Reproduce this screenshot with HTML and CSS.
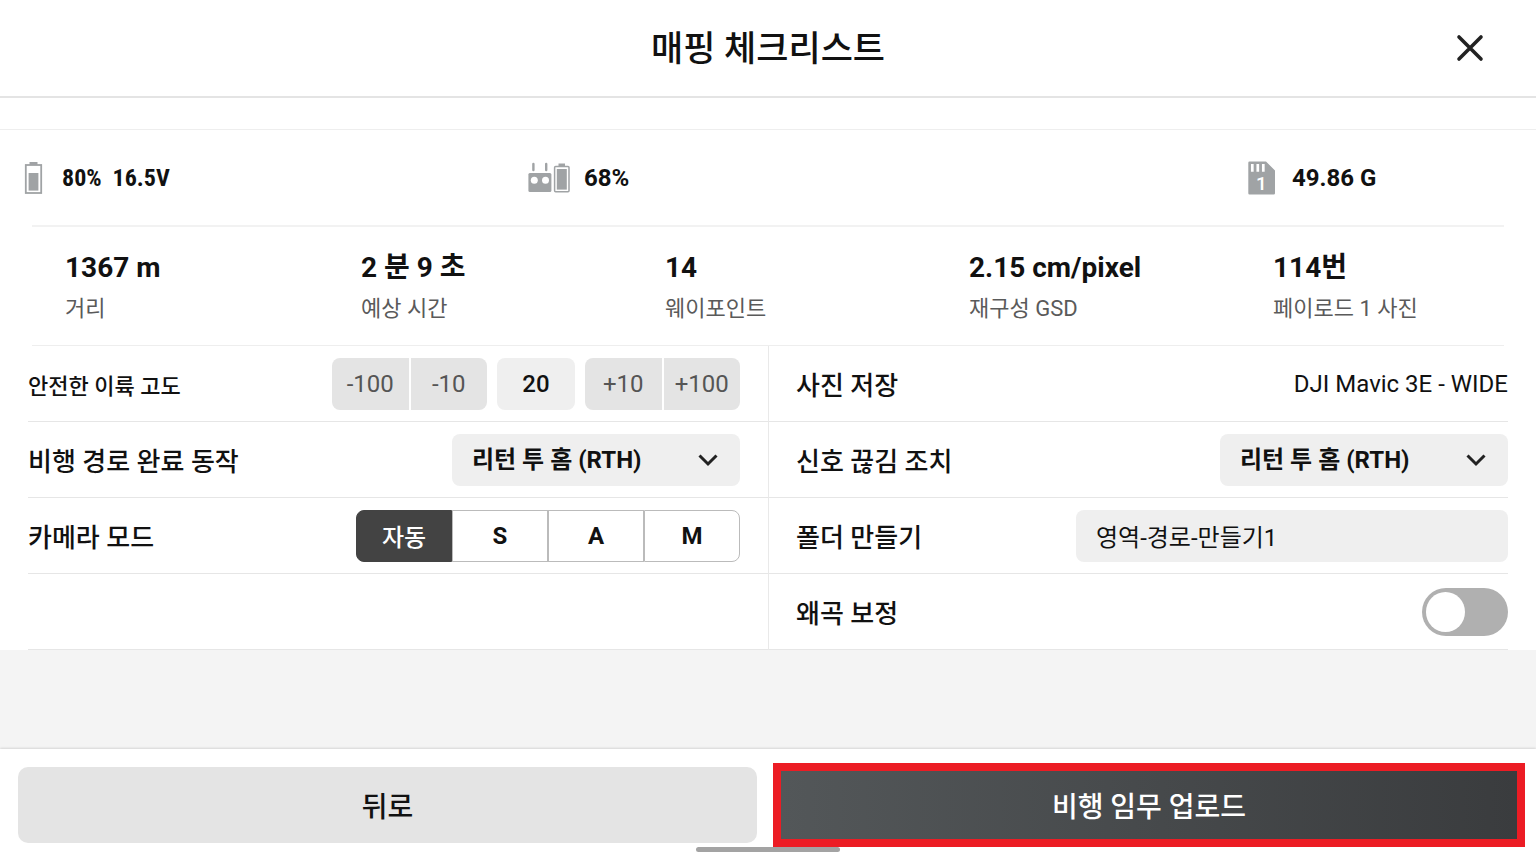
FILE: index.html
```html
<!DOCTYPE html>
<html lang="ko">
  <head>
    <meta charset="UTF-8" />
    <meta name="viewport" content="width=device-width, initial-scale=1.0" />
    <title>매핑 체크리스트</title>
    <link rel="stylesheet" href="styles.css">
  </head>
  <body>
    <header class="header">
      <h1 class="title">매핑 체크리스트</h1>
      <button type="button" class="close" aria-label="닫기">
        <svg width="28" height="28" viewBox="0 0 28 28">
          <path d="M3 3L25 25M25 3L3 25" fill="none" stroke="#222" stroke-width="3.6" stroke-linecap="round" />
        </svg>
      </button>
    </header>

    <main class="content">
      <!-- 배터리, 조종기, SD 카드 -->
      <section class="status">
        <div class="status-item aircraft">
          <svg width="19" height="34" viewBox="0 0 19 34">
            <path d="M5.5 1h8v3h-8z" fill="#a0a3a5" />
            <rect x="1.8" y="4" width="15.4" height="28" fill="none" stroke="#a0a3a5" stroke-width="1.8" />
            <rect x="4.6" y="12" width="9.8" height="17.6" fill="#a0a3a5" />
          </svg>
          <span>80%</span>
          <span>16.5V</span>
        </div>
        <div class="status-item remote">
          <svg width="42" height="32" viewBox="0 0 42 32">
            <path d="M5.4 2v6M18.2 2v6" stroke="#a0a3a5" stroke-width="2.4" stroke-linecap="round" />
            <rect x="0.4" y="11" width="23" height="19" rx="1.5" fill="#a0a3a5" />
            <circle cx="6.3" cy="18.3" r="3.5" fill="#fff" />
            <circle cx="17.5" cy="18.3" r="3.5" fill="#fff" />
            <path d="M30.5 1.5h6.5v3h-6.5z" fill="#a0a3a5" />
            <rect x="26.6" y="4.6" width="14.4" height="25.2" rx="1" fill="none" stroke="#a0a3a5" stroke-width="1.5" />
            <rect x="28.8" y="7" width="10" height="20.6" fill="#a0a3a5" />
          </svg>
          <span>68%</span>
        </div>
        <div class="status-item">
          <svg width="28" height="34" viewBox="0 0 28 34">
            <path d="M1.5 0.5h16.5l9 9v22.7a1.3 1.3 0 0 1-1.3 1.3H1.5A1.3 1.3 0 0 1 .3 32.2V1.8A1.3 1.3 0 0 1 1.5 .5z" fill="#a0a3a5" />
            <path d="M4.3 3v7.8M9.8 3v7.8M15.3 3v7.8" stroke="#fff" stroke-width="2.7" />
            <text x="8" y="29" class="slot">1</text>
          </svg>
          <span>49.86 G</span>
        </div>
      </section>

      <section class="stats">
        <div class="stat"><strong>1367 m</strong><span>거리</span></div>
        <div class="stat"><strong>2 분 9 초</strong><span>예상 시간</span></div>
        <div class="stat"><strong>14</strong><span>웨이포인트</span></div>
        <div class="stat"><strong>2.15 cm/pixel</strong><span>재구성 GSD</span></div>
        <div class="stat"><strong>114번</strong><span>페이로드 1 사진</span></div>
      </section>

      <form class="settings">
        <div class="row">
          <label class="name small" for="altitude">안전한 이륙 고도</label>
          <div class="stepper">
            <div class="steps">
              <button type="button">-100</button>
              <button type="button">-10</button>
            </div>
            <input type="text" id="altitude" class="altitude" value="20">
            <div class="steps">
              <button type="button">+10</button>
              <button type="button">+100</button>
            </div>
          </div>
        </div>
        <div class="row">
          <span class="name">사진 저장</span>
          <span class="value">DJI Mavic 3E - WIDE</span>
        </div>

        <div class="row">
          <label class="name" for="finish">비행 경로 완료 동작</label>
          <div class="dropdown">
            <select id="finish"><option>리턴 투 홈 (RTH)</option></select>
            <svg class="arrow" width="22" height="14" viewBox="0 0 22 14">
              <path d="M2.5 2.5L11 11L19.5 2.5" fill="none" stroke="#222" stroke-width="3" />
            </svg>
          </div>
        </div>
        <div class="row">
          <label class="name" for="lost">신호 끊김 조치</label>
          <div class="dropdown">
            <select id="lost"><option>리턴 투 홈 (RTH)</option></select>
            <svg class="arrow" width="22" height="14" viewBox="0 0 22 14">
              <path d="M2.5 2.5L11 11L19.5 2.5" fill="none" stroke="#222" stroke-width="3" />
            </svg>
          </div>
        </div>

        <div class="row">
          <span class="name" id="mode">카메라 모드</span>
          <div class="segments" role="radiogroup" aria-labelledby="mode">
            <label class="auto"><input type="radio" name="mode" checked>자동</label>
            <label><input type="radio" name="mode">S</label>
            <label><input type="radio" name="mode">A</label>
            <label><input type="radio" name="mode">M</label>
          </div>
        </div>
        <div class="row">
          <label class="name" for="folder">폴더 만들기</label>
          <input type="text" id="folder" class="folder" value="영역-경로-만들기1">
        </div>

        <div class="row"></div>
        <div class="row">
          <label class="name" for="distortion">왜곡 보정</label>
          <input type="checkbox" id="distortion" class="toggle">
        </div>
      </form>
    </main>

    <footer class="footer">
      <button type="button" class="back">뒤로</button>
      <button type="button" class="upload">비행 임무 업로드</button>
      <div class="home-bar"></div>
    </footer>
  </body>
</html>
```
FILE: styles.css
```css
* {
  margin: 0;
  padding: 0;
  box-sizing: border-box;
}
body {
  display: flex;
  flex-direction: column;
  min-height: 100vh;
  background: #f4f4f4;
  color: #111;
  font-family: Roboto, "Noto Sans CJK KR", sans-serif;
  font-size: 24px;
}
button,
input,
select {
  border: none;
  font: inherit;
  color: inherit;
}
button {
  cursor: pointer;
}
.header {
  display: grid;
  grid-template-columns: 1fr auto 1fr;
  align-items: center;
  height: 98px;
  padding: 0 52px;
  border-bottom: 2px solid #e4e4e4;
  background: #fff;
}
.title {
  grid-column: 2;
  padding-top: 4px;
  font-size: 35px;
  font-weight: 500;
  line-height: 48px;
}
.close {
  justify-self: end;
  display: flex;
  background: none;
}
.content {
  flex: 1;
}

/* status */
.status {
  display: grid;
  grid-template-columns: 7fr 10fr 4fr;
  align-items: center;
  height: 127px;
  padding: 32px 0 0 24px;
  background: linear-gradient(#eee, #eee) 0 31px / 100% 1px no-repeat #fff;
  font-weight: 700;
}
.status-item {
  display: flex;
  align-items: center;
  gap: 16px;
}
.aircraft {
  gap: 11px;
  font-family: "Roboto Condensed", Roboto, sans-serif;
}
.aircraft svg {
  margin-right: 8px;
}
.remote {
  gap: 14px;
}
.slot {
  fill: #fff;
  font-size: 19px;
  font-weight: 500;
}

/* flight summary */
.stats {
  display: grid;
  grid-template-columns: 296fr 304fr 304fr 304fr 231fr;
  align-items: center;
  height: 121px;
  padding: 4px 32px 0 65px;
  background: linear-gradient(#f2f2f2, #f2f2f2) 50% 0 / calc(100% - 64px) 2px no-repeat,
    linear-gradient(#eee, #eee) 50% 100% / calc(100% - 64px) 1px no-repeat #fff;
}
.stat {
  display: flex;
  flex-direction: column;
}
.stat strong {
  font-size: 28px;
  line-height: 42px;
}
.stat span {
  color: #5a5a5a;
  font-size: 22px;
  line-height: 40px;
}

/* settings */
.settings {
  display: grid;
  grid-template-columns: 1fr 1fr;
  padding: 0 28px;
  background: #fff;
}
.row {
  display: flex;
  align-items: center;
  justify-content: space-between;
  height: 76px;
  padding-right: 28px;
  border-bottom: 1px solid #e6e6e6;
}
.row:nth-child(even) {
  padding: 0 0 0 27px;
  border-left: 1px solid #e9e9e9;
}
.name {
  font-size: 26px;
  font-weight: 500;
}
.small {
  font-size: 22px;
}
.stepper {
  display: flex;
  gap: 10px;
}
.steps {
  display: flex;
  gap: 2px;
  width: 155px;
  height: 52px;
  border-radius: 8px;
  overflow: hidden;
}
.steps button {
  flex: 1;
  background: #e4e4e4;
  color: #555;
}
.altitude {
  width: 78px;
  border-radius: 8px;
  background: #efefef;
  font-weight: 500;
  text-align: center;
}
.dropdown {
  position: relative;
  width: 288px;
}
.dropdown select {
  appearance: none;
  width: 100%;
  height: 52px;
  padding: 0 20px;
  border-radius: 8px;
  background: #efefef;
  font-weight: 700;
}
.arrow {
  position: absolute;
  top: 19px;
  right: 21px;
  pointer-events: none;
}
.segments {
  display: flex;
  width: 384px;
  height: 52px;
}
.segments label {
  flex: 1;
  display: flex;
  align-items: center;
  justify-content: center;
  border: 1px solid #bbb;
  font-weight: 700;
  cursor: pointer;
}
.segments label:first-child {
  border-radius: 8px 0 0 8px;
}
.segments label:last-child {
  border-radius: 0 8px 8px 0;
}
.segments .auto {
  font-weight: 500;
}
.segments label:has(:checked) {
  border-color: #434343;
  background: #434343;
  color: #fff;
}
.segments input {
  appearance: none;
}
.folder {
  width: 432px;
  height: 52px;
  padding: 0 20px;
  border-radius: 8px;
  background: #efefef;
}
.toggle {
  appearance: none;
  width: 86px;
  height: 48px;
  padding: 4px;
  border-radius: 24px;
  background: #b0b0b0;
}
.toggle::before {
  content: "";
  display: block;
  width: 39px;
  height: 40px;
  border-radius: 50%;
  background: #fff;
}
.toggle:checked::before {
  margin-left: auto;
}

/* bottom bar */
.footer {
  position: relative;
  display: grid;
  grid-template-columns: 739fr 752fr;
  gap: 16px;
  align-items: center;
  padding: 14px 11px 17px 18px;
  background: #fff;
  box-shadow: 0 -1px 2px rgba(0, 0, 0, 0.12);
  font-size: 28px;
  font-weight: 500;
}
.back {
  height: 76px;
  border-radius: 10px;
  background: #e4e4e4;
}
.upload {
  height: 84px;
  border: 8px solid #ec1c24;
  background: linear-gradient(90deg, #535759, #3a3c3e);
  color: #fff;
}
.home-bar {
  position: absolute;
  left: 50%;
  bottom: 12px;
  width: 144px;
  height: 5px;
  margin-left: -72px;
  border-radius: 3px;
  background: #a3a3a3;
}
```
